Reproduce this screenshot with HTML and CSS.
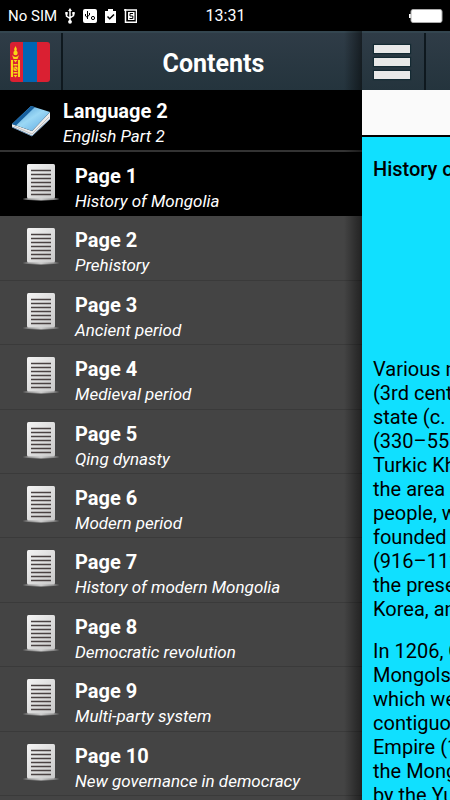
FILE: index.html
```html
<!DOCTYPE html>
<html lang="en">
<head>
  <meta charset="UTF-8" />
  <meta name="viewport" content="width=device-width, initial-scale=1.0"/>
  <title>History of Mongolia</title>
  <link rel="stylesheet" href="styles.css">
</head>
<body>
  <!-- Shared icons -->
  <svg class="sprite" aria-hidden="true">
    <defs>
      <linearGradient id="paper" x1="0" y1="0" x2="1" y2="1">
        <stop offset="0" stop-color="#f4f4f4"/>
        <stop offset="1" stop-color="#c9c9c9"/>
      </linearGradient>
      <linearGradient id="tray" x1="0" y1="0" x2="1" y2="0">
        <stop offset="0" stop-color="#666"/>
        <stop offset="0.5" stop-color="#ccc"/>
        <stop offset="1" stop-color="#666"/>
      </linearGradient>
      <linearGradient id="cover" x1="0" y1="0" x2="1" y2="1">
        <stop offset="0" stop-color="#3c8fd0"/>
        <stop offset="0.5" stop-color="#9bd8f5"/>
        <stop offset="1" stop-color="#5aa5e0"/>
      </linearGradient>
    </defs>
    <symbol id="page" viewBox="0 0 36 38">
      <ellipse cx="18" cy="35" rx="18" ry="1.500" fill="url(#tray)"/>
      <rect x="4" y="0" width="28" height="34.500" rx="1.500" fill="url(#paper)"/>
      <path d="M8 6.500h20M8 10.500h20M8 14.500h20M8 18.500h20M8 22.500h20M8 26.500h20M8 30.500h20" stroke="#4a4242" stroke-width="1.300"/>
    </symbol>
  </svg>

  <header class="status-bar">
    <div class="status-left">
      <span>No SIM</span>
      <svg width="10" height="16" viewBox="0 0 10 16" fill="none" stroke="#fff" stroke-width="1.500">
        <path d="M5 2v11M1.500 5.500v2.500L5 10.500M8.500 5v2.500L5 10"/>
        <path d="M5 0l2 3H3zM.3 4h2.400v2.400H.3zM7.300 4h2.400v2.400H7.300z" fill="#fff" stroke="none"/>
        <circle cx="5" cy="13.800" r="1.900" fill="#fff" stroke="none"/>
      </svg>
      <svg width="14" height="14" viewBox="0 0 14 14" fill="none" stroke="#000">
        <rect width="14" height="14" rx="2" fill="#fff" stroke="none"/>
        <path d="M4.500 2v8M2.500 5v2l2 1.500M6.500 4v2l-2 1.500"/>
        <circle cx="10" cy="9" r="1.600"/>
      </svg>
      <svg width="11" height="14" viewBox="0 0 11 14">
        <path d="M0 2h3V0h5v2h3v12H0z" fill="#fff"/>
        <path d="M2.500 7.500l2.200 2.200L9 5.500" fill="none" stroke="#000" stroke-width="1.500"/>
      </svg>
      <svg width="13" height="14" viewBox="0 0 13 14" fill="none" stroke="#fff">
        <path d="M0 1h13M1.500 0v13.300h11V1" stroke-width="1.500"/>
        <rect x="4" y="3" width="6.500" height="8" fill="#fff" stroke="none"/>
        <path d="M9 4.500H6V7h2.800v2.500H5.500" stroke="#000"/>
      </svg>
    </div>
    <time class="clock">13:31</time>
    <div class="status-right">
      <svg width="34" height="14" viewBox="0 0 34 14">
        <path d="M0 5h2v4H0z" fill="#fff"/>
        <rect x="2" y=".5" width="31" height="13" rx="2" fill="#fff" stroke="#aaa"/>
      </svg>
    </div>
  </header>

  <div class="app">
    <nav class="drawer">
      <div class="toolbar">
        <button type="button" class="flag-btn" aria-label="Mongolia">
          <svg width="42" height="42" viewBox="0 0 42 42">
            <rect x="1" y="1" width="40" height="40" rx="3" fill="#da2032"/>
            <path d="M14 1h14v40H14z" fill="#0066b3"/>
            <g fill="#f9d616">
              <path d="M6.500 5q2 3 1 5h-2q-1-2 1-5z"/>
              <circle cx="6.500" cy="12" r="2.200"/>
              <path d="M3 14q3.500 4 7 0l-1.500 4h-4z"/>
              <path d="M2 19h2v17H2zM9 19h2v17H9zM4.500 19h4l-2 2.500zM4.500 23h4v1.500h-4zM4.500 31h4v1.500h-4zM4.500 34h4l-2 2.500z"/>
              <circle cx="6.500" cy="27.700" r="2.300"/>
            </g>
            <path d="M4.500 27.700q1-1.500 2 0t2 0" fill="none" stroke="#da2032" stroke-width=".7"/>
          </svg>
        </button>
        <h1 class="toolbar-title">Contents</h1>
      </div>

      <a href="#language" class="language">
        <svg width="40" height="32" viewBox="0 0 40 32">
          <path d="M1 19L21 26 39 7v7L21 31 1 22z" fill="#ececec"/>
          <path d="M1 22L21 31 39 14" fill="none" stroke="#6d94b8"/>
          <path d="M3 21l18 8L38 12" fill="none" stroke="#b4b4b4" stroke-width=".8"/>
          <path d="M1 19L20 1 39 7 21 26z" fill="url(#cover)"/>
          <path d="M1 19L20 1l4 1L5 20.500z" fill="#17609e"/>
        </svg>
        <span class="text"><strong>Language 2</strong><em>English Part 2</em></span>
      </a>

      <ul class="pages">
        <li><a href="#page1" class="active"><svg class="icon"><use href="#page"/></svg><span class="text"><strong>Page 1</strong><em>History of Mongolia</em></span></a></li>
        <li><a href="#page2"><svg class="icon"><use href="#page"/></svg><span class="text"><strong>Page 2</strong><em>Prehistory</em></span></a></li>
        <li><a href="#page3"><svg class="icon"><use href="#page"/></svg><span class="text"><strong>Page 3</strong><em>Ancient period</em></span></a></li>
        <li><a href="#page4"><svg class="icon"><use href="#page"/></svg><span class="text"><strong>Page 4</strong><em>Medieval period</em></span></a></li>
        <li><a href="#page5"><svg class="icon"><use href="#page"/></svg><span class="text"><strong>Page 5</strong><em>Qing dynasty</em></span></a></li>
        <li><a href="#page6"><svg class="icon"><use href="#page"/></svg><span class="text"><strong>Page 6</strong><em>Modern period</em></span></a></li>
        <li><a href="#page7"><svg class="icon"><use href="#page"/></svg><span class="text"><strong>Page 7</strong><em>History of modern Mongolia</em></span></a></li>
        <li><a href="#page8"><svg class="icon"><use href="#page"/></svg><span class="text"><strong>Page 8</strong><em>Democratic revolution</em></span></a></li>
        <li><a href="#page9"><svg class="icon"><use href="#page"/></svg><span class="text"><strong>Page 9</strong><em>Multi-party system</em></span></a></li>
        <li><a href="#page10"><svg class="icon"><use href="#page"/></svg><span class="text"><strong>Page 10</strong><em>New governance in democracy</em></span></a></li>
      </ul>
    </nav>

    <main class="content">
      <div class="toolbar">
        <button type="button" class="menu-btn" aria-label="Menu">
          <span></span><span></span><span></span>
        </button>
      </div>
      <div class="banner"></div>
      <article class="article">
        <h2>History of</h2>
        <p>Various nomadic<br>(3rd century<br>state (c.<br>(330–555<br>Turkic Khaganate<br>the area<br>people, who<br>founded<br>(916–1125)<br>the present<br>Korea, and</p>
        <p>In 1206, Genghis<br>Mongols,<br>which were<br>contiguous<br>Empire (1206<br>the Mongol<br>by the Yuan</p>
      </article>
    </main>
  </div>
</body>
</html>
```

FILE: styles.css
```css
/* Global Styling */
* {
  box-sizing: border-box;
}

body {
  margin: 0;
  height: 100vh;
  display: flex;
  flex-direction: column;
  overflow: hidden;
  background: #000;
  color: #fff;
  font-family: Roboto, sans-serif;
}

button {
  border: none;
  background: none;
  padding: 0;
  cursor: pointer;
}

a {
  color: inherit;
  text-decoration: none;
}

.sprite {
  position: absolute;
  width: 0;
  height: 0;
}

/* Status bar */
.status-bar {
  flex: none;
  display: grid;
  grid-template-columns: 1fr auto 1fr;
  align-items: center;
  height: 31px;
  padding: 0 7px 0 8px;
  font-size: 15px;
}

.status-left {
  display: flex;
  align-items: center;
  gap: 8px;
}

.clock {
  font-size: 16px;
}

.status-right {
  display: flex;
  justify-content: flex-end;
}

/* Layout */
.app {
  flex: 1;
  min-height: 0;
  display: flex;
}

.drawer {
  position: relative;
  flex: 1;
  min-width: 0;
  display: flex;
  flex-direction: column;
}

/* shadow that the open page casts on the drawer */
.drawer::after {
  content: "";
  position: absolute;
  top: 0;
  right: 0;
  bottom: 0;
  width: 18px;
  background: linear-gradient(90deg, rgba(0, 0, 0, 0), rgba(0, 0, 0, 0.5));
  pointer-events: none;
}

.content {
  flex: 0 0 88px;
  display: flex;
  flex-direction: column;
  overflow: hidden;
  background: #10e0ff;
  color: #000;
}

.toolbar {
  flex: none;
  display: flex;
  height: 59px;
  border-top: 2px solid #344650;
  background: linear-gradient(#2f3c47, #24343d);
}

.flag-btn {
  width: 63px;
  padding: 0 2px 0 0;
  border-right: 2px solid #0e181e;
}

.flag-btn svg {
  vertical-align: middle;
}

.toolbar-title {
  flex: 1;
  margin: 0;
  padding-left: 2px;
  font-size: 25px;
  line-height: 62px;
  text-align: center;
}

/* Drawer list */
.language {
  flex: none;
  display: flex;
  gap: 12px;
  height: 62px;
  padding: 9px 0 0 11px;
  border-bottom: 2px solid #333;
}

.language svg {
  margin-top: 6px;
}

.pages {
  flex: 1;
  display: grid;
  grid-template-rows: repeat(10, 1fr);
  margin: 0;
  padding: 0 0 4px;
  list-style: none;
  background: #444;
}

.pages a {
  display: flex;
  gap: 16px;
  height: 100%;
  padding: 12px 0 0 23px;
  border-bottom: 1px solid #3a3a3a;
}

.pages a.active {
  background: #000;
  border-color: #000;
}

.icon {
  width: 36px;
  height: 38px;
}

.text {
  display: flex;
  flex-direction: column;
  white-space: nowrap;
}

.text strong {
  font-size: 20px;
  line-height: 25px;
}

.text em {
  font-size: 17px;
  line-height: 25px;
}

/* Page peeking out on the right */
.menu-btn {
  flex: none;
  display: flex;
  flex-direction: column;
  align-items: center;
  gap: 5px;
  width: 64px;
  padding: 12px 3px 0 0;
  border-right: 2px solid #0e181e;
}

.menu-btn span {
  width: 36px;
  height: 8px;
  background: #e8e8e8;
  box-shadow: 0 0 1px 1px #142a33;
}

.banner {
  flex: none;
  height: 47px;
  background: #fafafa;
  border-bottom: 2px solid #000;
}

.article {
  padding: 20px 0 0 11px;
  white-space: nowrap;
}

.article h2 {
  margin: 0 0 176px;
  font-size: 20px;
  font-weight: 500;
  line-height: 24px;
}

.article p {
  margin: 0 0 18px;
  font-size: 20px;
  line-height: 24px;
}
```
